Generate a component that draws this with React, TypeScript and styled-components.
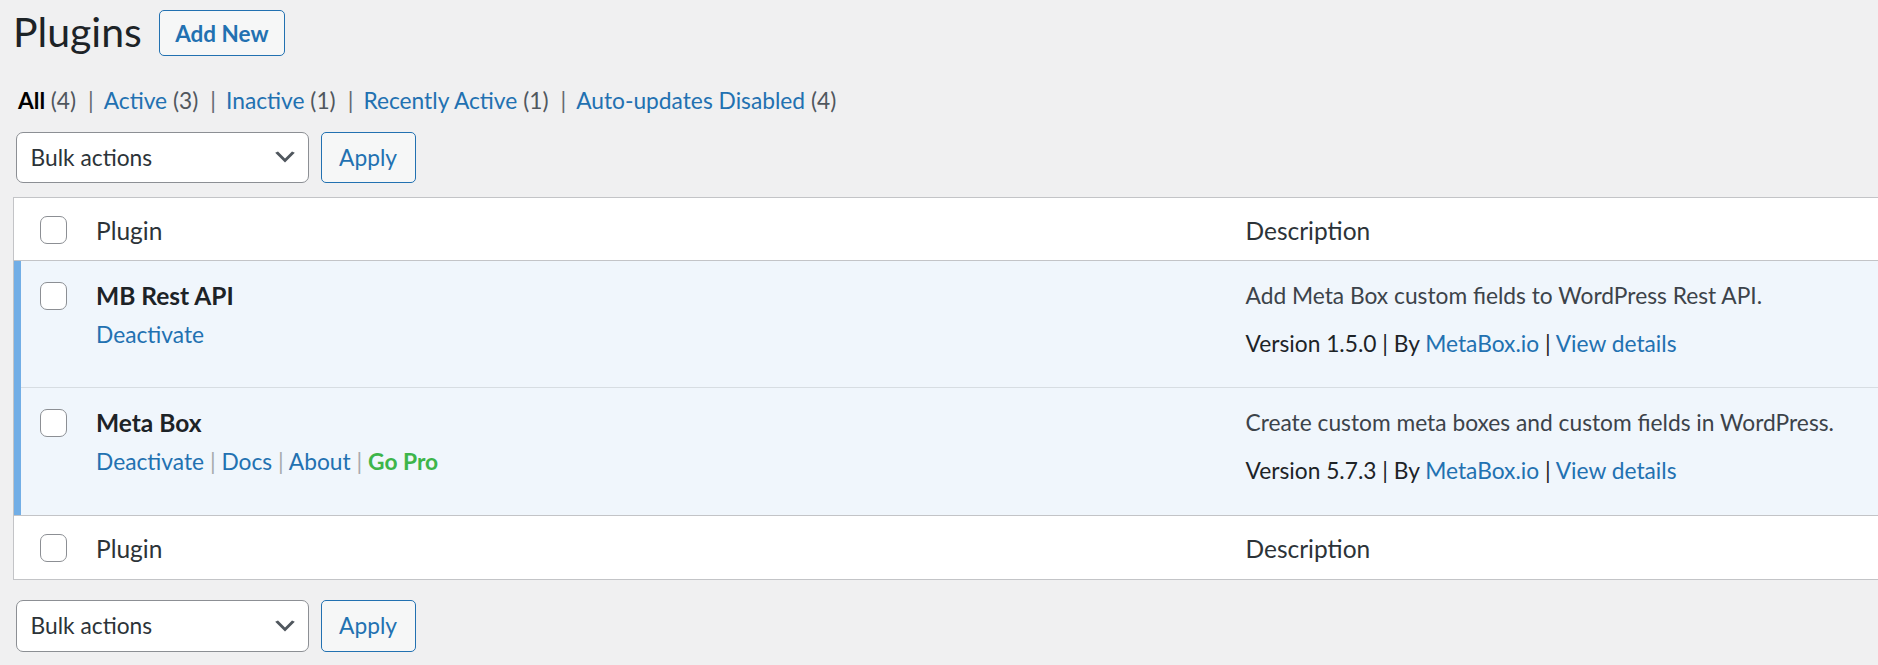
import React from "react";
import styled, { createGlobalStyle } from "styled-components";

const GlobalStyle = createGlobalStyle`
  *, *::before, *::after { box-sizing: border-box; }
  html, body {
    margin: 0;
    padding: 0;
    background: #f0f0f1;
    overflow: hidden;
  }
  body {
    font-family: Lato, "Open Sans", "Noto Sans", sans-serif;
    color: #3c434a;
    font-size: 22.75px;
  }
`;

const Page = styled.div`
  padding: 9px 0 0 13px;
`;

const TitleRow = styled.div`
  display: flex;
  align-items: flex-start;
`;

const Title = styled.h1`
  margin: 0 0 0 0;
  font-size: 41px;
  line-height: 46px;
  font-weight: 400;
  color: #1d2327;
`;

const OutlineButton = styled.button`
  display: inline-flex;
  align-items: center;
  justify-content: center;
  height: 46px;
  padding: 0 14px;
  border: 1px solid #2271b1;
  border-radius: 5px;
  background: #f6f7f7;
  color: #2271b1;
  font-family: inherit;
  font-size: 22.5px;
  font-weight: 700;
  cursor: pointer;
`;

const AddNewButton = styled(OutlineButton)`
  margin-left: 17px;
  margin-top: 1px;
  width: 126px;
`;

const Filters = styled.ul`
  display: flex;
  margin: 28px 0 0 5px;
  padding: 0;
  list-style: none;
  font-size: 22.75px;
  line-height: 34px;
  color: #646970;
  white-space: pre;
`;

const FilterItem = styled.li`
  margin: 0;
`;

const FilterLink = styled.a<{ $current?: boolean }>`
  color: ${(p) => (p.$current ? "#000" : "#2271b1")};
  font-weight: ${(p) => (p.$current ? 700 : 400)};
  text-decoration: none;
`;

const Count = styled.span`
  color: #50575e;
  font-weight: 400;
`;

const FilterSeparator = styled.span`
  margin: 0 10px 0 12px;
  color: #646970;
`;

const Toolbar = styled.div<{ $bottom?: boolean }>`
  display: flex;
  gap: 12px;
  margin-top: ${(p) => (p.$bottom ? "20.5px" : "13.5px")};
  padding-left: 2.6px;
`;

const BulkSelect = styled.div`
  display: flex;
  align-items: center;
  justify-content: space-between;
  width: 293px;
  height: 51.5px;
  padding: 0 9px 0 14px;
  background: #fff;
  border: 1px solid #8c8f94;
  border-radius: 7px;
  color: #2c3338;
  font-size: 22.75px;
`;

const ApplyButton = styled(OutlineButton)`
  height: 51.5px;
  padding: 0 17.5px;
  font-size: 22.75px;
  font-weight: 400;
  width: 95px;
`;

const Chevron = () => (
  <svg width="28" height="28" viewBox="0 0 20 20" aria-hidden="true">
    <path d="M5 6l5 5 5-5 2 1-7 7-7-7 2-1z" fill="#50575e" />
  </svg>
);

const TableFrame = styled.table`
  width: calc(100% + 30px);
  margin-top: 14px;
  border: 1px solid #c3c4c7;
  border-spacing: 0;
  background: #fff;
  table-layout: fixed;
`;

const HeadCell = styled.th<{ $foot?: boolean }>`
  text-align: left;
  vertical-align: top;
  padding: 16px 17.5px 12px;
  font-size: 24.5px;
  line-height: 34.3px;
  font-weight: 400;
  color: #2c3338;
  border-bottom: ${(p) => (p.$foot ? "none" : "1px solid #c3c4c7")};
  border-top: ${(p) => (p.$foot ? "1px solid #c3c4c7" : "none")};
`;

const HeadCheckCell = styled(HeadCell)`
  padding: 18px 0 0 25.5px;
`;

const BodyRow = styled.tr`
  background: #f0f6fc;
  &:not(:last-child) > * {
    box-shadow: inset 0 -1px 0 rgba(0, 0, 0, 0.1);
  }
`;

const CheckCell = styled.th`
  vertical-align: top;
  padding: 21px 0 0 18.5px;
  border-left: 7px solid #72aee6;
  text-align: left;
`;

const PluginCell = styled.td`
  vertical-align: top;
  padding: 17px 17.5px;
`;

const DescCell = styled.td`
  vertical-align: top;
  padding: 18px 17.5px 27px;
  font-size: 22.75px;
  line-height: 34px;
`;

const Checkbox = styled.span`
  display: block;
  width: 27.5px;
  height: 27.5px;
  background: #fff;
  border: 1px solid #8c8f94;
  border-radius: 7px;
`;

const PluginName = styled.strong`
  display: block;
  font-size: 24.5px;
  line-height: 36.75px;
  font-weight: 700;
  color: #1d2327;
  margin-bottom: 3px;
`;

const RowActions = styled.div`
  font-size: 22.75px;
  line-height: 34px;
  color: #a7aaad;
  white-space: pre;
`;

const ActionLink = styled.a<{ $pro?: boolean }>`
  color: ${(p) => (p.$pro ? "#3db54a" : "#2271b1")};
  font-weight: ${(p) => (p.$pro ? 700 : 400)};
  text-decoration: none;
`;

const DescText = styled.p`
  margin: 0 0 14px;
  color: #3c434a;
`;

const VersionLine = styled.div`
  color: #1d2327;
  white-space: pre;
`;

const TextLink = styled.a`
  color: #2271b1;
  text-decoration: none;
`;

type Plugin = {
  name: string;
  description: string;
  version: string;
  actions: { label: string; pro?: boolean }[];
};

const plugins: Plugin[] = [
  {
    name: "MB Rest API",
    description: "Add Meta Box custom fields to WordPress Rest API.",
    version: "1.5.0",
    actions: [{ label: "Deactivate" }],
  },
  {
    name: "Meta Box",
    description: "Create custom meta boxes and custom fields in WordPress.",
    version: "5.7.3",
    actions: [
      { label: "Deactivate" },
      { label: "Docs" },
      { label: "About" },
      { label: "Go Pro", pro: true },
    ],
  },
];

const filters = [
  { label: "All", count: 4, current: true },
  { label: "Active", count: 3 },
  { label: "Inactive", count: 1 },
  { label: "Recently Active", count: 1 },
  { label: "Auto-updates Disabled", count: 4 },
];

const Tablenav = ({ bottom }: { bottom?: boolean }) => (
  <Toolbar $bottom={bottom}>
    <BulkSelect>
      <span>Bulk actions</span>
      <Chevron />
    </BulkSelect>
    <ApplyButton>Apply</ApplyButton>
  </Toolbar>
);

export default function App() {
  return (
    <>
      <GlobalStyle />
      <Page>
        <TitleRow>
          <Title>Plugins</Title>
          <AddNewButton>Add New</AddNewButton>
        </TitleRow>

        <Filters>
          {filters.map((f, i) => (
            <FilterItem key={f.label}>
              <FilterLink href="#" $current={f.current}>
                {f.label} <Count>({f.count})</Count>
              </FilterLink>
              {i < filters.length - 1 ? <FilterSeparator>|</FilterSeparator> : null}
            </FilterItem>
          ))}
        </Filters>

        <Tablenav />

        <TableFrame>
          <colgroup>
            <col style={{ width: 64.5 }} />
            <col style={{ width: 1149.5 }} />
            <col />
          </colgroup>
          <thead>
            <tr>
              <HeadCheckCell as="td">
                <Checkbox />
              </HeadCheckCell>
              <HeadCell>Plugin</HeadCell>
              <HeadCell>Description</HeadCell>
            </tr>
          </thead>
          <tbody>
            {plugins.map((p) => (
              <BodyRow key={p.name}>
                <CheckCell>
                  <Checkbox />
                </CheckCell>
                <PluginCell>
                  <PluginName>{p.name}</PluginName>
                  <RowActions>
                    {p.actions.map((a, i) => (
                      <React.Fragment key={a.label}>
                        <ActionLink href="#" $pro={a.pro}>
                          {a.label}
                        </ActionLink>
                        {i < p.actions.length - 1 ? " | " : ""}
                      </React.Fragment>
                    ))}
                  </RowActions>
                </PluginCell>
                <DescCell>
                  <DescText>{p.description}</DescText>
                  <VersionLine>
                    Version {p.version} | By <TextLink href="#">MetaBox.io</TextLink> |{" "}
                    <TextLink href="#">View details</TextLink>
                  </VersionLine>
                </DescCell>
              </BodyRow>
            ))}
          </tbody>
          <tfoot>
            <tr>
              <HeadCheckCell as="td" $foot>
                <Checkbox />
              </HeadCheckCell>
              <HeadCell $foot>Plugin</HeadCell>
              <HeadCell $foot>Description</HeadCell>
            </tr>
          </tfoot>
        </TableFrame>

        <Tablenav bottom />
      </Page>
    </>
  );
}
